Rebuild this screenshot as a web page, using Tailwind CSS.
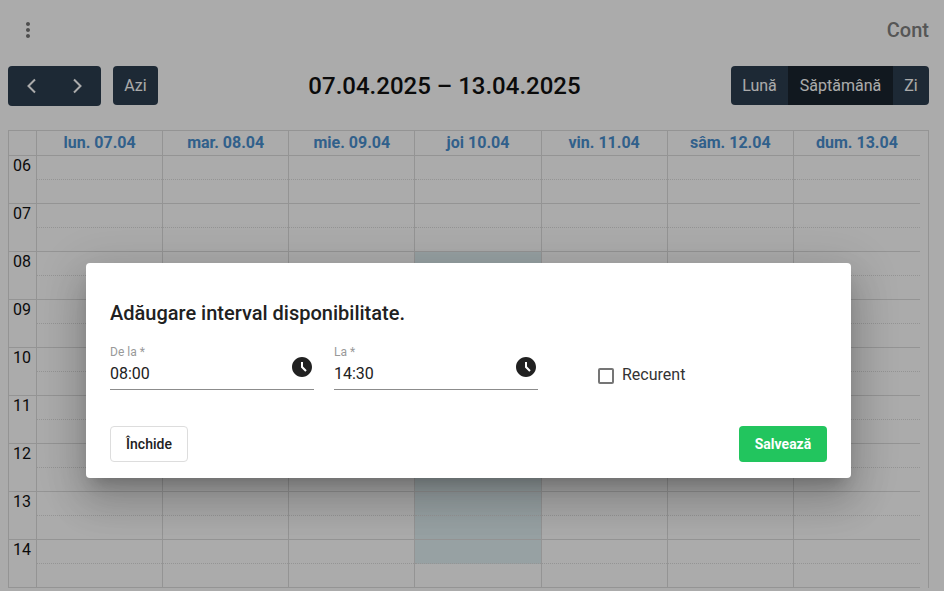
<!DOCTYPE html>
<html lang="en">
  <head>
    <meta charset="UTF-8" />
    <title>Calendar</title>
    <script src="https://cdn.jsdelivr.net/npm/@tailwindcss/browser@4"></script>
  </head>
  <body class="relative h-screen overflow-hidden bg-white font-['Roboto',sans-serif] text-[#111]">
    <!-- Top bar -->
    <header class="flex h-[60px] items-center justify-between pl-4 pr-[15px]">
      <svg class="h-6 w-6 fill-[#757575]" viewBox="0 0 24 24">
        <path d="M12 8c1.1 0 2-.9 2-2s-.9-2-2-2-2 .9-2 2 .9 2 2 2zm0 2c-1.1 0-2 .9-2 2s.9 2 2 2 2-.9 2-2-.9-2-2-2zm0 6c-1.1 0-2 .9-2 2s.9 2 2 2 2-.9 2-2-.9-2-2-2z" />
      </svg>
      <span class="text-xl font-medium text-[#808080]">Cont</span>
    </header>

    <!-- Calendar toolbar -->
    <div class="mt-1.5 flex items-start justify-between pl-2 pr-[15px]">
      <div class="flex gap-3">
        <div class="flex h-10 w-[93px] items-center rounded bg-[#2c3e50]">
          <button class="flex h-10 w-[46px] items-center justify-center">
            <svg class="ml-0.5 h-4 w-4 fill-none stroke-white stroke-2" viewBox="0 0 16 16"><path d="M11 1.5 4.5 8l6.5 6.5" /></svg>
          </button>
          <button class="flex h-10 w-[47px] items-center justify-center">
            <svg class="-ml-0.5 h-4 w-4 fill-none stroke-white stroke-2" viewBox="0 0 16 16"><path d="M5 1.5 11.500 8 5 14.500" /></svg>
          </button>
        </div>
        <button class="h-[39px] w-[45px] rounded bg-[#2c3e50] text-white">Azi</button>
      </div>
      <h2 class="mt-1 text-2xl leading-[32px] font-medium">07.04.2025 – 13.04.2025</h2>
      <div class="flex h-[39px] w-[198px] overflow-hidden rounded text-white">
        <button class="w-[57px] bg-[#2c3e50]">Lună</button>
        <button class="w-[105px] bg-[#1a252f]">Săptămână</button>
        <button class="w-[36px] bg-[#2c3e50]">Zi</button>
      </div>
    </div>

    <!-- Week grid -->
    <div class="mt-6 ml-2 mr-[15px] border-x border-t border-[#ddd]">
      <div class="grid w-[911px] grid-cols-[28px_repeat(7,1fr)] border-b border-[#ddd] text-center text-base leading-[24px] font-bold text-[#4a90cf]">
        <div class="border-r border-[#ddd]"></div>
        <div class="border-r border-[#ddd]">lun. 07.04</div>
        <div class="border-r border-[#ddd]">mar. 08.04</div>
        <div class="border-r border-[#ddd]">mie. 09.04</div>
        <div class="border-r border-[#ddd]">joi 10.04</div>
        <div class="border-r border-[#ddd]">vin. 11.04</div>
        <div class="border-r border-[#ddd]">sâm. 12.04</div>
        <div>dum. 13.04</div>
      </div>
      <div id="rows" class="relative w-[911px]">
        <!-- Available interval on Thursday -->
        <div class="absolute inset-0 grid grid-cols-[28px_repeat(7,1fr)]">
          <div class="col-start-5 mt-[96px] h-[312px] bg-[#e2f0f3]"></div>
        </div>
      </div>
    </div>

    <!-- Backdrop -->
    <div class="absolute inset-0 bg-black/33"></div>

    <!-- Dialog -->
    <div class="absolute top-[263px] left-[86px] w-[765px] rounded bg-white px-6 pt-10 pb-4 shadow-[0px_11px_15px_-7px_rgba(0,0,0,0.2),0px_24px_38px_3px_rgba(0,0,0,0.14),0px_9px_46px_8px_rgba(0,0,0,0.12)]">
      <h2 class="text-xl leading-[20px] font-medium text-[#212121]">Adăugare interval disponibilitate.</h2>
      <div class="mt-[22px] flex items-start gap-5">
        <div class="w-[204px] border-b border-[#8c8c8c]">
          <div class="text-xs leading-[14px] text-[#999]">De la *</div>
          <div class="flex h-[30px] items-start justify-between">
            <span class="mt-[3px] text-base leading-[24px] text-[#212121]">08:00</span>
            <svg class="-mt-[4px] h-6 w-6 fill-[#212121]" viewBox="0 0 24 24">
              <path d="M11.990 2C6.470 2 2 6.480 2 12s4.470 10 9.990 10C17.520 22 22 17.520 22 12S17.520 2 11.990 2zm3.300 14.710L11 12.410V7h2v4.590l3.710 3.710-1.420 1.410z" />
            </svg>
          </div>
        </div>
        <div class="w-[204px] border-b border-[#8c8c8c]">
          <div class="text-xs leading-[14px] text-[#999]">La *</div>
          <div class="flex h-[30px] items-start justify-between">
            <span class="mt-[3px] text-base leading-[24px] text-[#212121]">14:30</span>
            <svg class="-mt-[4px] h-6 w-6 fill-[#212121]" viewBox="0 0 24 24">
              <path d="M11.990 2C6.470 2 2 6.480 2 12s4.470 10 9.990 10C17.520 22 22 17.520 22 12S17.520 2 11.990 2zm3.300 14.710L11 12.410V7h2v4.590l3.710 3.710-1.420 1.410z" />
            </svg>
          </div>
        </div>
        <label class="mt-[18px] ml-10 flex items-center gap-2 text-base leading-[24px] text-[#333]">
          <span class="mt-[2px] h-4 w-4 rounded-[2px] border-2 border-[#757575]"></span>
          Recurent
        </label>
      </div>
      <div class="mt-[36px] flex justify-between">
        <button class="h-9 w-[78px] rounded border border-[#ddd] text-sm font-medium text-[#212121]">Închide</button>
        <button class="h-9 w-[88px] rounded bg-[#22c55e] text-sm font-bold text-white">Salvează</button>
      </div>
    </div>

    <script>
      // Hour rows, each one split in two half hours
      const hours = ["06", "07", "08", "09", "10", "11", "12", "13", "14"];
      const rows = document.getElementById("rows");
      hours.forEach((hour) => {
        let cells = "";
        for (let day = 0; day < 7; day++) {
          const line = day < 6 ? "border-r border-[#ddd]" : "";
          cells += `<div class="${line}"><div class="h-6 border-b border-dotted border-[#ddd]"></div><div class="h-6 border-b border-[#ddd]"></div></div>`;
        }
        rows.insertAdjacentHTML(
          "beforeend",
          `<div class="relative grid h-12 grid-cols-[28px_repeat(7,1fr)]"><div class="border-r border-b border-[#ddd] pl-1 text-base leading-[20px]">${hour}</div>${cells}</div>`
        );
      });
    </script>
  </body>
</html>
